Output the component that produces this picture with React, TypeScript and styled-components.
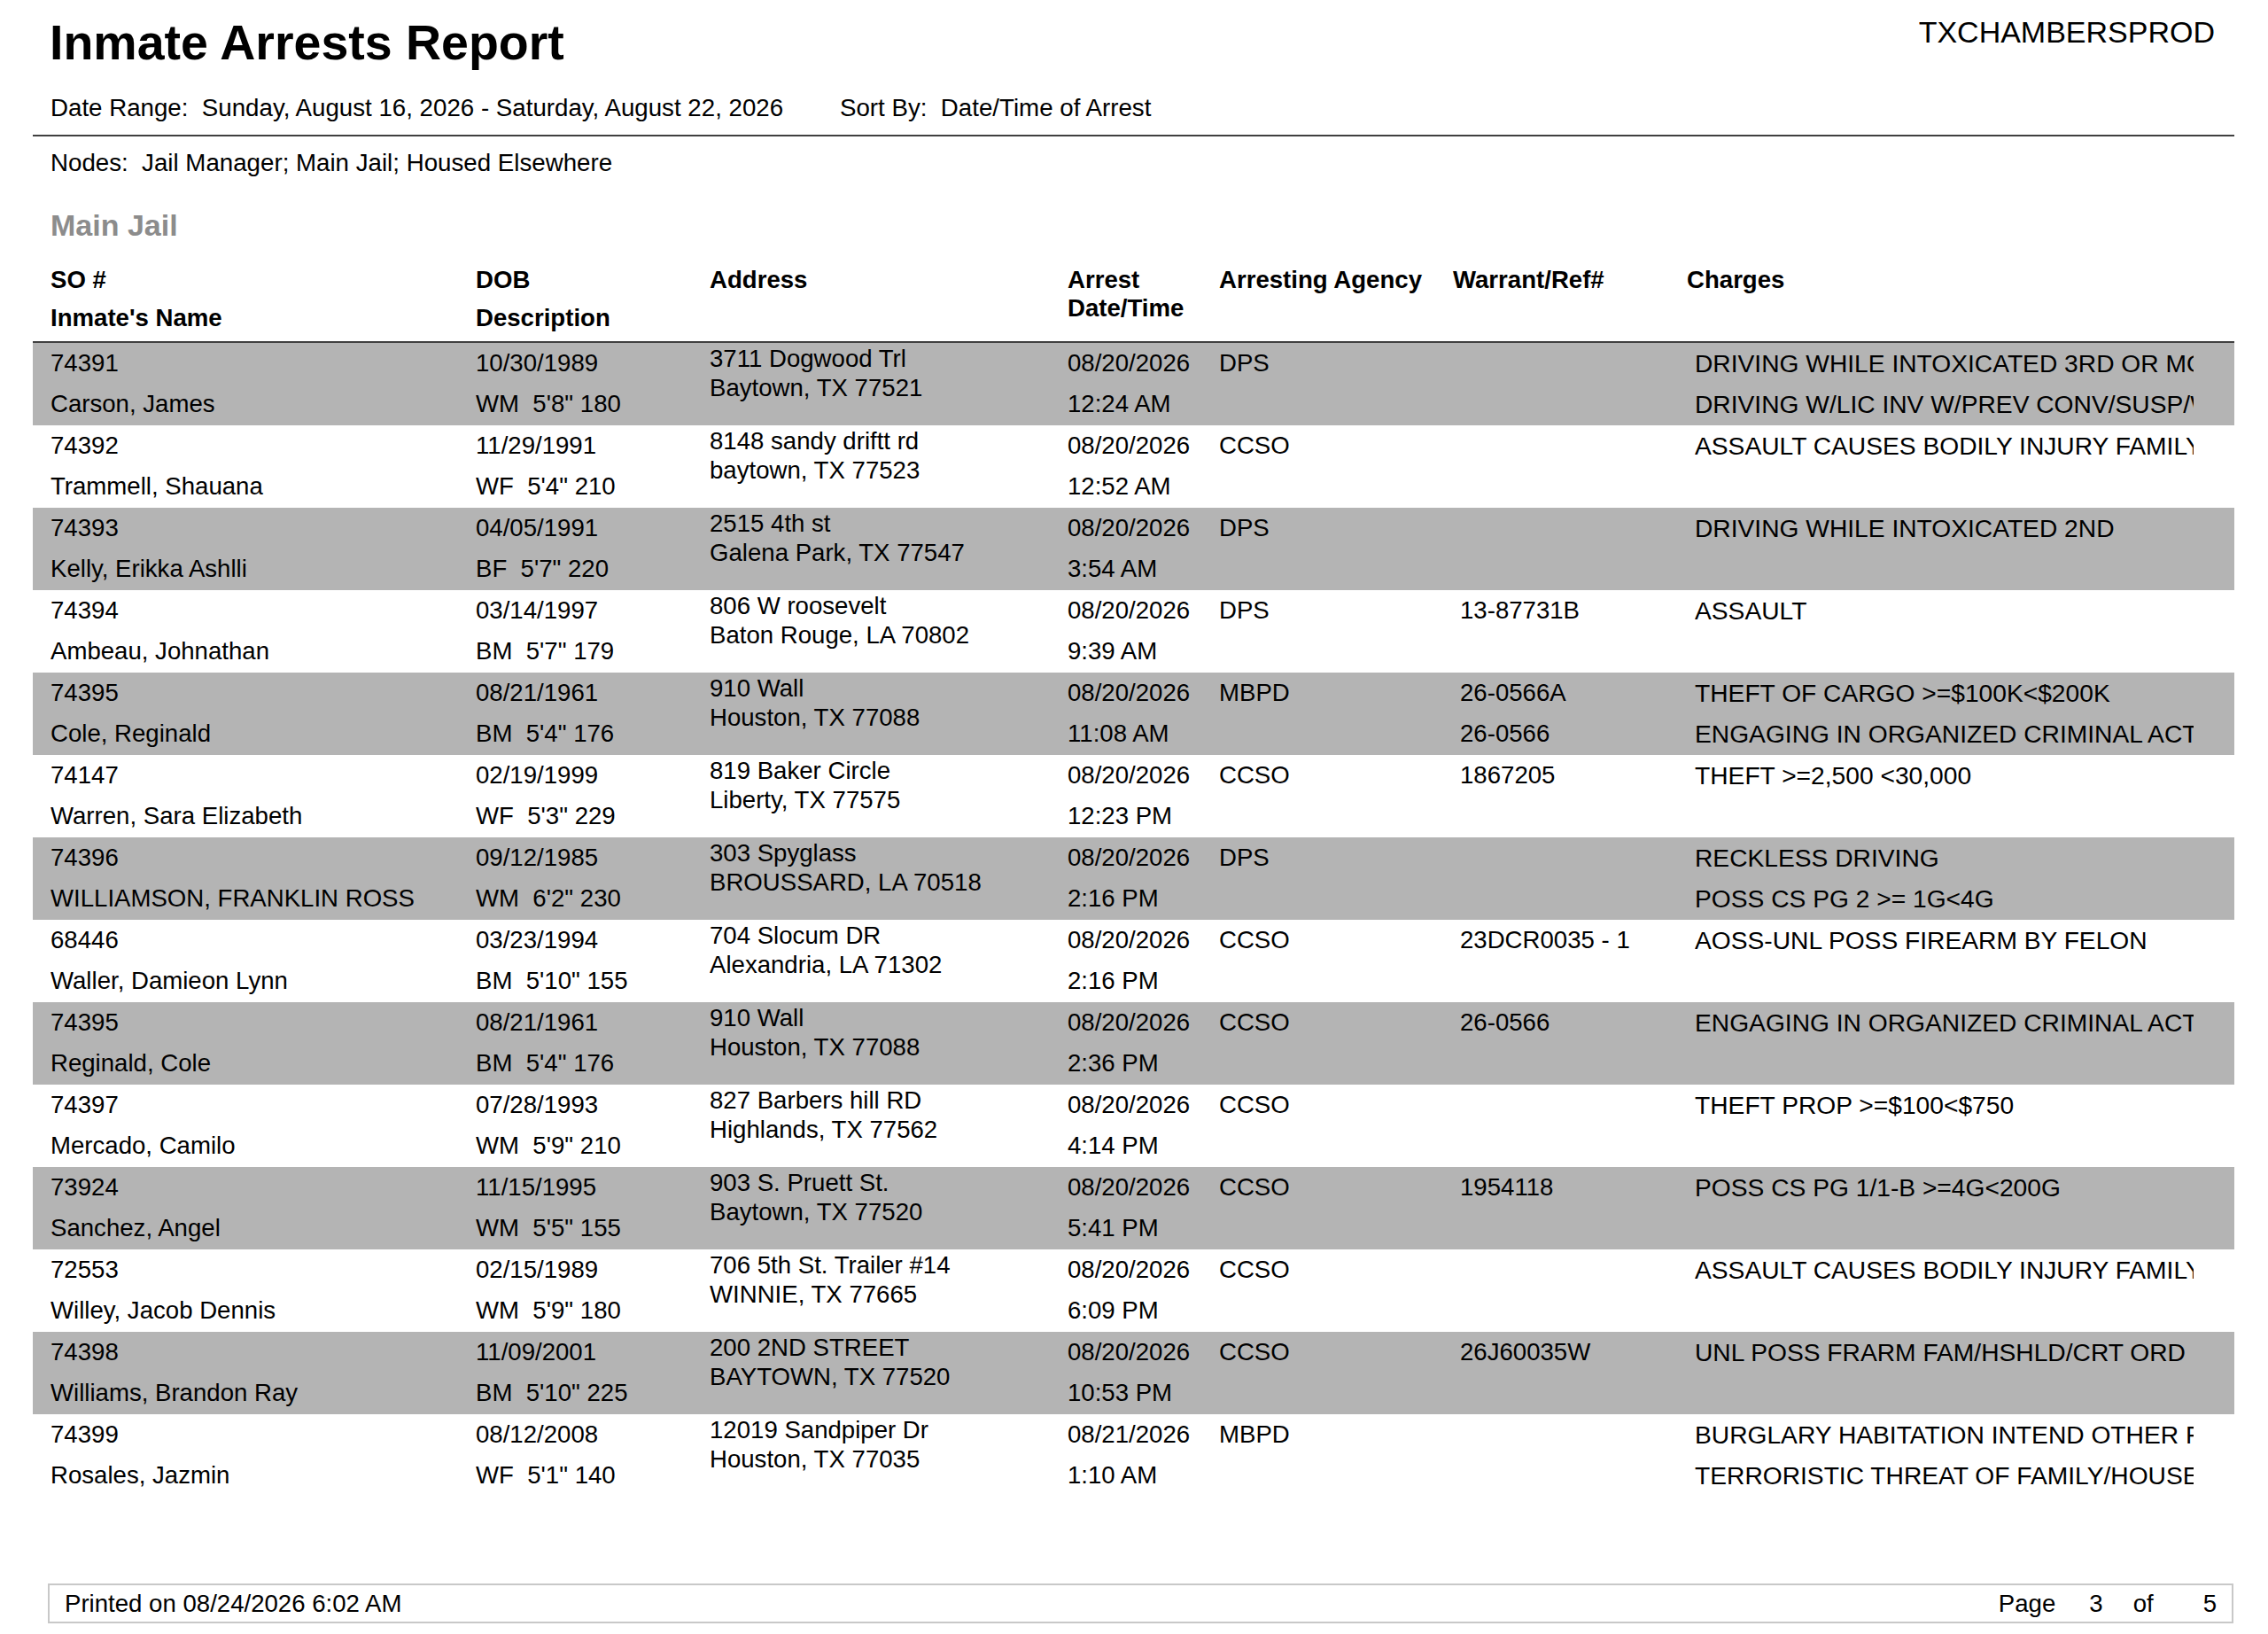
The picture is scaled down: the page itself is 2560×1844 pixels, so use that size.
import React from 'react';
import styled, {createGlobalStyle} from 'styled-components';

interface Arrest {
    so: string;
    name: string;
    dob: string;
    desc: string;
    address: [string, string];
    date: string;
    time: string;
    agency: string;
    warrants: string[];
    charges: string[];
}

const arrests: Arrest[] = [
    {so: '74391', name: 'Carson, James', dob: '10/30/1989', desc: 'WM  5\'8" 180', address: ['3711 Dogwood Trl', 'Baytown, TX 77521'], date: '08/20/2026', time: '12:24 AM', agency: 'DPS', warrants: [], charges: ['DRIVING WHILE INTOXICATED 3RD OR MORE', 'DRIVING W/LIC INV W/PREV CONV/SUSP/W/O FIN RES']},
    {so: '74392', name: 'Trammell, Shauana', dob: '11/29/1991', desc: 'WF  5\'4" 210', address: ['8148 sandy driftt rd', 'baytown, TX 77523'], date: '08/20/2026', time: '12:52 AM', agency: 'CCSO', warrants: [], charges: ['ASSAULT CAUSES BODILY INJURY FAMILY MEMBER']},
    {so: '74393', name: 'Kelly, Erikka Ashlli', dob: '04/05/1991', desc: 'BF  5\'7" 220', address: ['2515 4th st', 'Galena Park, TX 77547'], date: '08/20/2026', time: '3:54 AM', agency: 'DPS', warrants: [], charges: ['DRIVING WHILE INTOXICATED 2ND']},
    {so: '74394', name: 'Ambeau, Johnathan', dob: '03/14/1997', desc: 'BM  5\'7" 179', address: ['806 W roosevelt', 'Baton Rouge, LA 70802'], date: '08/20/2026', time: '9:39 AM', agency: 'DPS', warrants: ['13-87731B'], charges: ['ASSAULT']},
    {so: '74395', name: 'Cole, Reginald', dob: '08/21/1961', desc: 'BM  5\'4" 176', address: ['910 Wall', 'Houston, TX 77088'], date: '08/20/2026', time: '11:08 AM', agency: 'MBPD', warrants: ['26-0566A', '26-0566'], charges: ['THEFT OF CARGO >=$100K<$200K', 'ENGAGING IN ORGANIZED CRIMINAL ACTIVITY']},
    {so: '74147', name: 'Warren, Sara Elizabeth', dob: '02/19/1999', desc: 'WF  5\'3" 229', address: ['819 Baker Circle', 'Liberty, TX 77575'], date: '08/20/2026', time: '12:23 PM', agency: 'CCSO', warrants: ['1867205'], charges: ['THEFT >=2,500 <30,000']},
    {so: '74396', name: 'WILLIAMSON, FRANKLIN ROSS', dob: '09/12/1985', desc: 'WM  6\'2" 230', address: ['303 Spyglass', 'BROUSSARD, LA 70518'], date: '08/20/2026', time: '2:16 PM', agency: 'DPS', warrants: [], charges: ['RECKLESS DRIVING', 'POSS CS PG 2 >= 1G<4G']},
    {so: '68446', name: 'Waller, Damieon Lynn', dob: '03/23/1994', desc: 'BM  5\'10" 155', address: ['704 Slocum DR', 'Alexandria, LA 71302'], date: '08/20/2026', time: '2:16 PM', agency: 'CCSO', warrants: ['23DCR0035 - 1'], charges: ['AOSS-UNL POSS FIREARM BY FELON']},
    {so: '74395', name: 'Reginald, Cole', dob: '08/21/1961', desc: 'BM  5\'4" 176', address: ['910 Wall', 'Houston, TX 77088'], date: '08/20/2026', time: '2:36 PM', agency: 'CCSO', warrants: ['26-0566'], charges: ['ENGAGING IN ORGANIZED CRIMINAL ACTIVITY']},
    {so: '74397', name: 'Mercado, Camilo', dob: '07/28/1993', desc: 'WM  5\'9" 210', address: ['827 Barbers hill RD', 'Highlands, TX 77562'], date: '08/20/2026', time: '4:14 PM', agency: 'CCSO', warrants: [], charges: ['THEFT PROP >=$100<$750']},
    {so: '73924', name: 'Sanchez, Angel', dob: '11/15/1995', desc: 'WM  5\'5" 155', address: ['903 S. Pruett St.', 'Baytown, TX 77520'], date: '08/20/2026', time: '5:41 PM', agency: 'CCSO', warrants: ['1954118'], charges: ['POSS CS PG 1/1-B >=4G<200G']},
    {so: '72553', name: 'Willey, Jacob Dennis', dob: '02/15/1989', desc: 'WM  5\'9" 180', address: ['706 5th St. Trailer #14', 'WINNIE, TX 77665'], date: '08/20/2026', time: '6:09 PM', agency: 'CCSO', warrants: [], charges: ['ASSAULT CAUSES BODILY INJURY FAMILY MEMBER']},
    {so: '74398', name: 'Williams, Brandon Ray', dob: '11/09/2001', desc: 'BM  5\'10" 225', address: ['200 2ND STREET', 'BAYTOWN, TX 77520'], date: '08/20/2026', time: '10:53 PM', agency: 'CCSO', warrants: ['26J60035W'], charges: ['UNL POSS FRARM FAM/HSHLD/CRT ORD']},
    {so: '74399', name: 'Rosales, Jazmin', dob: '08/12/2008', desc: 'WF  5\'1" 140', address: ['12019 Sandpiper Dr', 'Houston, TX 77035'], date: '08/21/2026', time: '1:10 AM', agency: 'MBPD', warrants: [], charges: ['BURGLARY HABITATION INTEND OTHER FELONY', 'TERRORISTIC THREAT OF FAMILY/HOUSEHOLD']},
];

const App = () => {
    return (
        <>
            <GlobalStyle/>
            <Page>
                <TitleRow>
                    <Title>Inmate Arrests Report</Title>
                    <Database>TXCHAMBERSPROD</Database>
                </TitleRow>
                <InfoLine>
                    <InfoItem $width={891}>Date Range:  Sunday, August 16, 2026 - Saturday, August 22, 2026</InfoItem>
                    <InfoItem>Sort By:  Date/Time of Arrest</InfoItem>
                </InfoLine>
                <Rule/>
                <NodesLine>Nodes:  Jail Manager; Main Jail; Housed Elsewhere</NodesLine>
                <SectionTitle>Main Jail</SectionTitle>
                <TableHead>
                    <HeadCell>SO #<br/>Inmate's Name</HeadCell>
                    <HeadCell>DOB<br/>Description</HeadCell>
                    <HeadCell>Address</HeadCell>
                    <WrapHeadCell>Arrest<br/>Date/Time</WrapHeadCell>
                    <HeadCell>Arresting Agency</HeadCell>
                    <HeadCell>Warrant/Ref#</HeadCell>
                    <HeadCell>Charges</HeadCell>
                </TableHead>
                <HeadRule/>
                {arrests.map((a, i) => (
                    <Row key={i} $shaded={i % 2 === 0}>
                        <Cell>{a.so}<br/>{a.name}</Cell>
                        <Cell>{a.dob}<br/>{a.desc}</Cell>
                        <AddressCell>{a.address[0]}<br/>{a.address[1]}</AddressCell>
                        <Cell>{a.date}<br/>{a.time}</Cell>
                        <Cell>{a.agency}</Cell>
                        <Cell $inset={8}>
                            {a.warrants.map((w) => <Line key={w}>{w}</Line>)}
                        </Cell>
                        <ChargesCell>
                            {a.charges.map((c) => <Line key={c}>{c}</Line>)}
                        </ChargesCell>
                    </Row>
                ))}
                <Footer>
                    <span>Printed on 08/24/2026 6:02 AM</span>
                    <PageInfo>
                        <PagePart>Page</PagePart>
                        <PagePart $gap={38}>3</PagePart>
                        <PagePart $gap={34}>of</PagePart>
                        <PagePart $gap={56}>5</PagePart>
                    </PageInfo>
                </Footer>
            </Page>
        </>
    );
};

const GlobalStyle = createGlobalStyle`
  html, body {
    margin: 0;
    padding: 0;
    background: #ffffff;
  }

  body {
    font-family: "Liberation Sans", Arial, sans-serif;
    color: #000000;
  }
`;

const COLUMNS = '480px 264px 404px 171px 264px 264px 572px';

const Page = styled.div`
  width: 2560px;
  height: 1844px;
  box-sizing: border-box;
  padding-bottom: 12px;
  display: flex;
  flex-direction: column;
  background: #ffffff;
`;

const TitleRow = styled.div`
  display: flex;
  align-items: flex-start;
  justify-content: space-between;
  padding: 15px 60px 0 56px;
`;

const Title = styled.h1`
  margin: 0;
  font-size: 55.5px;
  line-height: 66px;
  font-weight: bold;
`;

const Database = styled.div`
  margin-top: 1px;
  font-size: 34px;
  line-height: 40px;
`;

const InfoLine = styled.div`
  display: flex;
  margin-top: 25px;
  padding-left: 57px;
  font-size: 27.7px;
  line-height: 32px;
`;

const InfoItem = styled.span<{ $width?: number }>`
  white-space: pre;
  width: ${(props) => props.$width ? `${props.$width}px` : 'auto'};
`;

const Rule = styled.div`
  height: 2px;
  margin: 14px 38px 0 37px;
  background-color: #404040;
`;

const NodesLine = styled.div`
  margin-top: 14px;
  padding-left: 57px;
  font-size: 27.7px;
  line-height: 32px;
  white-space: pre;
`;

const SectionTitle = styled.h2`
  margin: 34px 0 0;
  padding-left: 57px;
  font-size: 34px;
  line-height: 40px;
  font-weight: bold;
  color: #8c8c8c;
`;

const TableHead = styled.div`
  display: grid;
  grid-template-columns: ${COLUMNS};
  margin: 20px 38px 0 37px;
  padding-left: 20px;
  font-size: 27.6px;
  font-weight: bold;
`;

const HeadCell = styled.div`
  line-height: 43px;
  white-space: nowrap;
`;

const WrapHeadCell = styled.div`
  padding-top: 6px;
  line-height: 32px;
  white-space: nowrap;
`;

const HeadRule = styled.div`
  height: 2px;
  margin: 5px 38px 0 37px;
  background-color: #404040;
`;

const Row = styled.div<{ $shaded: boolean }>`
  display: grid;
  grid-template-columns: ${COLUMNS};
  height: 93px;
  margin: 0 38px 0 37px;
  padding-left: 20px;
  font-size: 27.6px;
  background-color: ${(props) => props.$shaded ? '#b4b4b4' : '#ffffff'};
`;

const Cell = styled.div<{ $inset?: number }>`
  line-height: 46px;
  padding-left: ${(props) => props.$inset ?? 0}px;
  white-space: pre;
  overflow: hidden;
`;

const ChargesCell = styled.div`
  padding-left: 9px;
  font-size: 28.2px;
  line-height: 46px;
  overflow: hidden;
`;

const AddressCell = styled.div`
  padding-top: 1px;
  line-height: 33px;
  white-space: nowrap;
  overflow: hidden;
`;

const Line = styled.div`
  white-space: nowrap;
  overflow: hidden;
`;

const Footer = styled.div`
  display: flex;
  align-items: center;
  justify-content: space-between;
  height: 45px;
  box-sizing: border-box;
  margin: auto 39px 0 54px;
  padding: 0 17px 0 17px;
  border: 2px solid #c8c8c8;
  font-size: 27.6px;
  line-height: 39px;
`;

const PageInfo = styled.div`
  display: flex;
`;

const PagePart = styled.span<{ $gap?: number }>`
  margin-left: ${(props) => props.$gap ?? 0}px;
`;

export default App;
